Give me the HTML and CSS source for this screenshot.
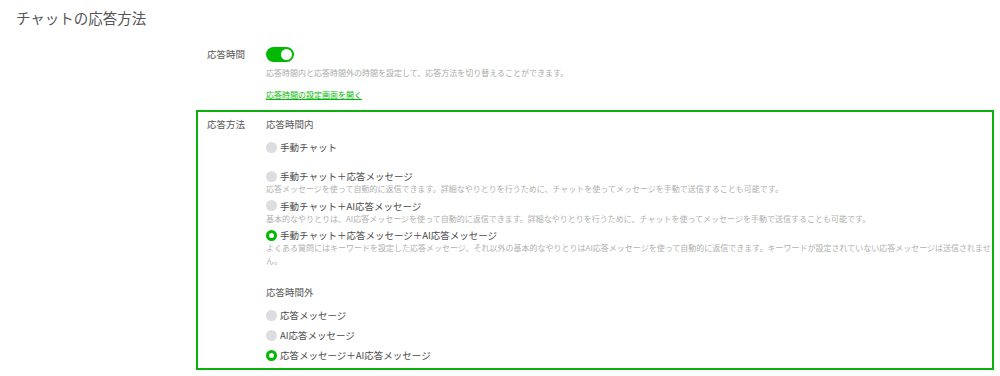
FILE: index.html
```html
<!DOCTYPE html>
<html lang="ja">
<head>
    <meta charset="UTF-8">
    <meta name="viewport" content="width=device-width, initial-scale=1.0">
    <title>チャットの応答方法</title>
    <link rel="stylesheet" href="styles.css">
</head>
<body>
    <h1 class="page-title">チャットの応答方法</h1>

    <div class="form">
        <!-- 応答時間 -->
        <div class="row">
            <div class="row-label">応答時間</div>
            <div class="row-body">
                <span class="toggle on"></span>
                <p class="help">応答時間内と応答時間外の時間を設定して、応答方法を切り替えることができます。</p>
                <a class="link" href="#">応答時間の設定画面を開く</a>
            </div>
        </div>

        <!-- 応答方法 -->
        <div class="row row-boxed">
            <div class="row-label">応答方法</div>
            <div class="row-body">
                <div class="group-title">応答時間内</div>
                <ul class="options">
                    <li class="option">
                        <label><span class="radio"></span>手動チャット</label>
                        <p class="option-desc"></p>
                    </li>
                    <li class="option">
                        <label><span class="radio"></span>手動チャット＋応答メッセージ</label>
                        <p class="option-desc">応答メッセージを使って自動的に返信できます。詳細なやりとりを行うために、チャットを使ってメッセージを手動で送信することも可能です。</p>
                    </li>
                    <li class="option">
                        <label><span class="radio"></span>手動チャット＋AI応答メッセージ</label>
                        <p class="option-desc">基本的なやりとりは、AI応答メッセージを使って自動的に返信できます。詳細なやりとりを行うために、チャットを使ってメッセージを手動で送信することも可能です。</p>
                    </li>
                    <li class="option">
                        <label><span class="radio checked"></span>手動チャット＋応答メッセージ＋AI応答メッセージ</label>
                        <p class="option-desc">よくある質問にはキーワードを設定した応答メッセージ、それ以外の基本的なやりとりはAI応答メッセージを使って自動的に返信できます。キーワードが設定されていない応答メッセージは送信されません。</p>
                    </li>
                </ul>

                <div class="group-title group-title-next">応答時間外</div>
                <ul class="options options-compact">
                    <li class="option">
                        <label><span class="radio"></span>応答メッセージ</label>
                    </li>
                    <li class="option">
                        <label><span class="radio"></span>AI応答メッセージ</label>
                    </li>
                    <li class="option">
                        <label><span class="radio checked"></span>応答メッセージ＋AI応答メッセージ</label>
                    </li>
                </ul>
            </div>
        </div>
    </div>
</body>
</html>
```

FILE: styles.css
```css
/* Reset */
* {
    margin: 0;
    padding: 0;
    box-sizing: border-box;
}

body {
    font-family: "Noto Sans CJK JP", "Noto Sans", sans-serif;
    background-color: #fff;
    color: #333;
}

.page-title {
    font-size: 14.5px;
    font-weight: normal;
    line-height: 20px;
    color: #555;
    padding: 8px 0 0 16px;
}

/* Form */
.form {
    margin: 19px 0 0 196px;
    width: 798px;
}

.row {
    display: flex;
    padding-left: 11px;
}

.row-label {
    width: 59px;
    flex-shrink: 0;
    font-size: 9.5px;
    line-height: 14px;
    color: #555;
}

.row-body {
    flex-grow: 1;
    min-width: 0;
}

/* Toggle */
.toggle {
    display: block;
    position: relative;
    width: 28px;
    height: 15px;
    border-radius: 8px;
    background-color: #ccc;
}

.toggle.on {
    background-color: #00b900;
}

.toggle::after {
    content: "";
    position: absolute;
    top: 2px;
    left: 2px;
    width: 11px;
    height: 11px;
    border-radius: 50%;
    background-color: #fff;
}

.toggle.on::after {
    left: 15px;
}

.help {
    margin-top: 5px;
    font-size: 8px;
    line-height: 12px;
    color: #aaa;
}

.link {
    display: block;
    width: fit-content;
    margin-top: 10px;
    font-size: 8px;
    line-height: 12px;
    color: #00b900;
    text-decoration: underline;
}

/* Boxed row */
.row-boxed {
    margin-top: 9px;
    border: 2px solid #0cb00c;
    padding: 5px 0 6px 9px;
}

.group-title {
    font-size: 9.5px;
    line-height: 14px;
    color: #555;
}

.group-title-next {
    margin-top: 18px;
}

.options {
    list-style: none;
    margin-top: 9px;
}

.option {
    margin-bottom: 3px;
}

.option label {
    display: flex;
    align-items: center;
    gap: 3px;
    font-size: 9.5px;
    line-height: 14px;
    color: #4a4a4a;
}

.option-desc {
    min-height: 12px;
    margin-right: -8px;
    font-size: 8px;
    line-height: 12.5px;
    color: #b0b0b0;
}

.options-compact .option {
    margin-bottom: 6px;
}

.options-compact .option:last-child {
    margin-bottom: 0;
}

/* Radio */
.radio {
    display: inline-block;
    flex-shrink: 0;
    width: 11px;
    height: 11px;
    border-radius: 50%;
    background-color: #dcdde1;
}

.radio.checked {
    background-color: #fff;
    border: 3px solid #00b900;
}
```
